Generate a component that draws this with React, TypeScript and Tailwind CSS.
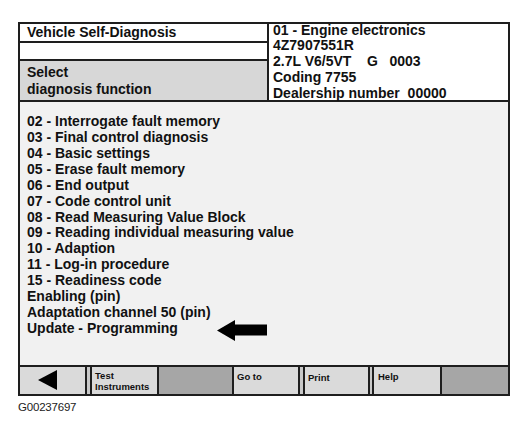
import React from "react";

const items = [
  "02 - Interrogate fault memory",
  "03 - Final control diagnosis",
  "04 - Basic settings",
  "05 - Erase fault memory",
  "06 - End output",
  "07 - Code control unit",
  "08 - Read Measuring Value Block",
  "09 - Reading individual measuring value",
  "10 - Adaption",
  "11 - Log-in procedure",
  "15 - Readiness code",
  "Enabling (pin)",
  "Adaptation channel 50 (pin)",
];

export default function App() {
  return (
    <div className="w-[528px] h-[433px] bg-white pt-[22px] pl-[18px] font-['Liberation_Sans',Arial,sans-serif] text-[#111]">
      <div className="w-[492px] border-2 border-[#1e1e1e]">
        {/* Header */}
        <div className="flex h-[78px] border-b-2 border-[#1e1e1e]">
          <div className="w-[249px] flex flex-col border-r-2 border-[#1e1e1e]">
            <div className="h-[19px] bg-white border-b-2 border-[#1e1e1e] pl-[7px] text-[14px] font-bold leading-[17px]">
              Vehicle Self-Diagnosis
            </div>
            <div className="h-[18px] bg-white border-b-2 border-[#1e1e1e]"></div>
            <div className="flex-1 bg-[#d7d7d7] pl-[7px] pt-[2.5px] text-[14px] font-bold leading-[17px]">
              <div>Select</div>
              <div>diagnosis function</div>
            </div>
          </div>
          <div className="flex-1 bg-white pl-[4px] text-[14px] font-bold leading-[15.75px] whitespace-pre">
            <div className="-mt-[1.5px]">
              <div>01 - Engine electronics</div>
              <div>4Z7907551R</div>
              <div>{"2.7L V6/5VT    G   0003"}</div>
              <div>Coding 7755</div>
              <div>{"Dealership number  00000"}</div>
            </div>
          </div>
        </div>
        {/* Body */}
        <div className="h-[263px] bg-[#f1f1f1] pl-[7px] pt-[12px] text-[14px] font-bold leading-[15.92px]">
          {items.map((t) => (
            <div key={t}>{t}</div>
          ))}
          <div className="flex items-center h-[15.92px]">
            <span>Update - Programming</span>
            <svg className="ml-[39px] mt-[3px] shrink-0" width="50" height="21" viewBox="0 0 50 21">
              <polygon points="0,10.5 18,0 18,4.5 50,4.5 50,15.5 18,15.5 18,21" fill="#000" />
            </svg>
          </div>
        </div>
        {/* Bottom bar */}
        <div className="flex h-[29px] bg-[#1e1e1e] border-t-2 border-[#1e1e1e] text-[9.5px] font-bold leading-[11px]">
          <div className="w-[65px] bg-[#dadada] pl-[18px] pt-[3px]">
            <svg width="19" height="20" viewBox="0 0 19 20">
              <polygon points="0,10 19,0 19,20" fill="#000" />
            </svg>
          </div>
          <div className="w-[2px]"></div>
          <div className="w-[3px] bg-[#c8c8c8]"></div>
          <div className="w-[2px]"></div>
          <div className="w-[65px] bg-[#dadada] pl-[3px] pt-[2.5px]">
            <div>Test</div>
            <div>Instruments</div>
          </div>
          <div className="w-[2px]"></div>
          <div className="w-[73px] bg-[#a6a6a6]"></div>
          <div className="w-[2px]"></div>
          <div className="w-[64px] bg-[#dadada] pl-[3px] pt-[3.5px]">Go to</div>
          <div className="w-[2px]"></div>
          <div className="w-[3px] bg-[#c8c8c8]"></div>
          <div className="w-[2px]"></div>
          <div className="w-[63px] bg-[#dadada] pl-[3px] pt-[4.5px]">Print</div>
          <div className="w-[2px]"></div>
          <div className="w-[2px] bg-[#c8c8c8]"></div>
          <div className="w-[2px]"></div>
          <div className="w-[66px] bg-[#dadada] pl-[4px] pt-[3.5px]">Help</div>
          <div className="w-[2px]"></div>
          <div className="w-[66px] bg-[#a6a6a6]"></div>
        </div>
      </div>
      <div className="pt-[4px] text-[11.5px] leading-[14px] text-[#222] tracking-[-0.2px]">G00237697</div>
    </div>
  );
}
